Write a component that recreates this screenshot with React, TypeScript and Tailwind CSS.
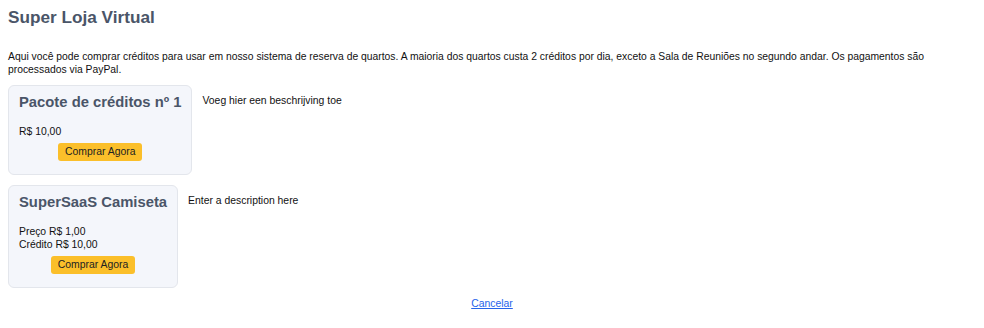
import React from 'react';

interface Product {
  name: string;
  lines: string[];
  description: string;
}

const products: Product[] = [
  {
    name: 'Pacote de créditos nº 1',
    lines: ['R$ 10,00'],
    description: 'Voeg hier een beschrijving toe',
  },
  {
    name: 'SuperSaaS Camiseta',
    lines: ['Preço R$ 1,00', 'Crédito R$ 10,00'],
    description: 'Enter a description here',
  },
];

const ProductRow: React.FC<{ product: Product }> = ({ product }) => (
  <div className="flex items-start gap-[10px]">
    <div className="flex flex-col rounded-md border border-[#e3e6ec] bg-[#f4f6fb] px-[10px] pt-[6px] pb-[13px]">
      <h2 className="text-[14.8px] font-bold leading-[20px] text-[#4a5568] whitespace-nowrap">{product.name}</h2>
      <div className="mt-[13px] text-[10.4px] leading-[13px] text-[#111]">
        {product.lines.map((line) => (
          <div key={line}>{line}</div>
        ))}
      </div>
      <div className="mt-[5px] flex justify-center">
        <button className="h-[18px] rounded-[3px] bg-[#fbbf2a] px-[7px] text-[10.4px] leading-[18px] text-[#222]">
          Comprar Agora
        </button>
      </div>
    </div>
    <p className="pt-[9px] text-[10.4px] leading-[13px] text-[#111]">{product.description}</p>
  </div>
);

export default function App() {
  return (
    <div className="min-h-screen bg-white px-2 pt-[5px] font-['Liberation_Sans',Arial,sans-serif]">
      <h1 className="text-[17.2px] font-bold leading-[24px] text-[#4a5568]">Super Loja Virtual</h1>
      <p className="mt-[22px] text-[10.35px] leading-[12.5px] text-[#111]">
        Aqui você pode comprar créditos para usar em nosso sistema de reserva de quartos. A maioria dos quartos custa 2
        créditos por dia, exceto a Sala de Reuniões no segundo andar. Os pagamentos são processados via PayPal.
      </p>
      <div className="mt-[9px] flex flex-col gap-[10px]">
        {products.map((p) => (
          <ProductRow key={p.name} product={p} />
        ))}
      </div>
      <div className="mt-[9px] text-center text-[10.4px] leading-[13px]">
        <a href="#" className="text-[#2563eb] underline">
          Cancelar
        </a>
      </div>
    </div>
  );
}
